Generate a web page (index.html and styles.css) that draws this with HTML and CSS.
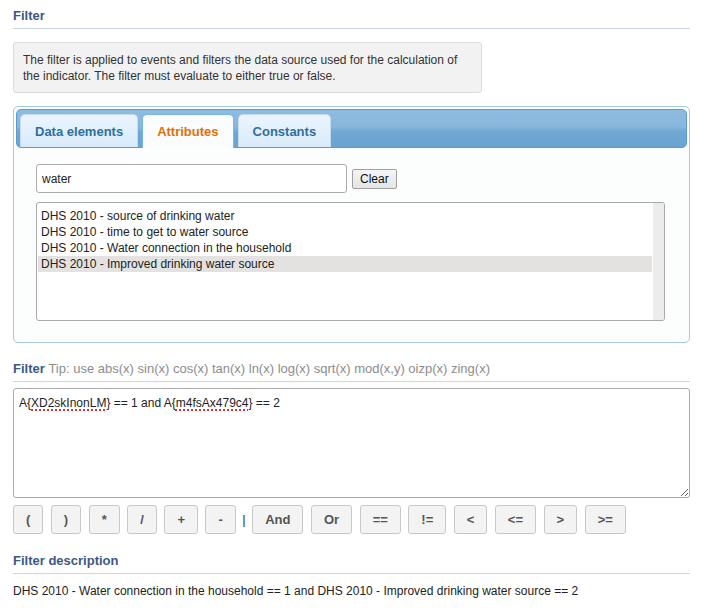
FILE: index.html
```html
<!DOCTYPE html>
<html>
<head>
<meta charset="utf-8">
<link rel="stylesheet" href="styles.css">
</head>
<body>
<h3 class="section-title">Filter</h3>
<div class="info-box">The filter is applied to events and filters the data source used for the calculation of the indicator. The filter must evaluate to either true or false.</div>

<div class="tabs">
  <div class="tabs-nav">
    <div class="tab">Data elements</div>
    <div class="tab tab-active">Attributes</div>
    <div class="tab">Constants</div>
  </div>
  <div class="tab-panel">
    <div class="search-row">
      <div class="search-input">water</div>
      <button class="clear-btn">Clear</button>
    </div>
    <div class="listbox">
      <div class="list-items">
        <div class="list-item">DHS 2010 - source of drinking water</div>
        <div class="list-item">DHS 2010 - time to get to water source</div>
        <div class="list-item">DHS 2010 - Water connection in the household</div>
        <div class="list-item list-item-selected">DHS 2010 - Improved drinking water source</div>
      </div>
      <div class="list-track"></div>
    </div>
  </div>
</div>

<h3 class="section-title section-tip">Filter <span class="tip">Tip: use abs(x) sin(x) cos(x) tan(x) ln(x) log(x) sqrt(x) mod(x,y) oizp(x) zing(x)</span></h3>
<div class="expression">A{<span class="misspelled">XD2skInonLM</span>} == 1 and A{<span class="misspelled">m4fsAx479c4</span>} == 2</div>

<div class="op-row">
  <button class="op-btn">(</button>
  <button class="op-btn">)</button>
  <button class="op-btn">*</button>
  <button class="op-btn">/</button>
  <button class="op-btn">+</button>
  <button class="op-btn">-</button>
  <span class="op-sep">|</span>
  <button class="op-btn">And</button>
  <button class="op-btn">Or</button>
  <button class="op-btn">==</button>
  <button class="op-btn">!=</button>
  <button class="op-btn">&lt;</button>
  <button class="op-btn">&lt;=</button>
  <button class="op-btn">&gt;</button>
  <button class="op-btn">&gt;=</button>
</div>

<h3 class="section-title section-desc">Filter description</h3>
<div class="description">DHS 2010 - Water connection in the household == 1 and DHS 2010 - Improved drinking water source == 2</div>
</body>
</html>
```

FILE: styles.css
```css
* { box-sizing: border-box; }

html, body {
  margin: 0;
  background: #ffffff;
}

body {
  padding: 8px 13px 0 13px;
  font-family: "Liberation Sans", Arial, sans-serif;
  font-size: 12px;
  color: #222;
}

.section-title {
  margin: 0;
  font-size: 13px;
  line-height: 16px;
  font-weight: bold;
  color: #3c5882;
  padding-bottom: 4px;
  border-bottom: 1px solid #c6d7ea;
}

.info-box {
  margin-top: 13px;
  width: 469px;
  background: #f2f2f2;
  border: 1px solid #dcdcdc;
  border-radius: 3px;
  padding: 9px 9px 8px 9px;
  font-size: 12px;
  line-height: 16px;
  color: #333;
}

.tabs {
  margin-top: 13px;
  border: 1px solid #a6c9e2;
  border-radius: 5px;
  padding: 2px;
  background: #fcfdfd;
}

.tabs-nav {
  display: flex;
  gap: 4px;
  padding: 4px 3px 0 3px;
  height: 39px;
  border: 1px solid #5b9bd0;
  border-radius: 5px;
  background: linear-gradient(to bottom, #8ebbe0 0%, #88b7dd 45%, #71a8d4 58%, #6aa3d1 100%);
}

.tab {
  height: 33px;
  padding: 0 14px;
  display: flex;
  align-items: center;
  font-size: 13px;
  font-weight: bold;
  color: #2e6e9e;
  border: 1px solid #c5dbec;
  border-bottom: 0;
  border-radius: 5px 5px 0 0;
  background: linear-gradient(to bottom, #eaf4fd 0%, #e2f0fc 50%, #d8eaf9 100%);
}

.tab-active {
  height: 34px;
  margin-bottom: -1px;
  color: #e17009;
  border-color: #79b7e7;
  background: #fbfcfd;
}

.tab-panel {
  padding: 16px 22px 19px 20px;
}

.search-row {
  display: flex;
  align-items: center;
  gap: 5px;
}

.search-input {
  width: 311px;
  height: 29px;
  border: 1px solid #ababab;
  border-radius: 3px;
  background: #fff;
  padding: 0 5px;
  display: flex;
  align-items: center;
  font-size: 12px;
  color: #222;
}

.clear-btn {
  height: 20px;
  padding: 0 7px;
  font-family: "Liberation Sans", Arial, sans-serif;
  font-size: 12px;
  color: #111;
  border: 1px solid #a0a0a0;
  border-radius: 2px;
  background: linear-gradient(to bottom, #f6f6f6, #e4e4e4);
}

.listbox {
  margin-top: 9px;
  height: 119px;
  border: 1px solid #a9a9a9;
  border-radius: 3px;
  background: #fff;
  display: flex;
  overflow: hidden;
}

.list-items {
  flex: 1;
  padding: 5px 1px 0 1px;
}

.list-item {
  height: 16px;
  line-height: 16px;
  padding-left: 3px;
  font-size: 12px;
  color: #222;
  white-space: nowrap;
}

.list-item-selected {
  background: #e3e2e0;
}

.list-track {
  width: 11px;
  background: #ececec;
}

.section-tip {
  margin-top: 18px;
}

.tip {
  font-weight: normal;
  color: #8c8c8c;
}

.expression {
  margin-top: 6px;
  height: 110px;
  border: 1px solid #a9a9a9;
  border-radius: 3px;
  padding: 7px 5px;
  font-size: 12px;
  line-height: 15px;
  color: #222;
  background: #fff;
  resize: vertical;
  overflow: auto;
}

.misspelled {
  text-decoration: underline dotted #e03030;
  text-decoration-thickness: 2px;
  text-decoration-skip-ink: none;
  text-underline-offset: 2px;
}

.op-row {
  margin-top: 7px;
  display: flex;
  align-items: center;
  gap: 7.5px;
}

.op-btn {
  height: 29px;
  padding: 0 12px;
  font-family: "Liberation Sans", Arial, sans-serif;
  font-size: 13px;
  font-weight: bold;
  color: #555;
  background: #f3f3f3;
  border: 1px solid #c8c8c8;
  border-radius: 3px;
}

.op-sep {
  margin: 0 -1px;
  font-size: 13px;
  color: #333;
}

.section-desc {
  margin-top: 19px;
}

.description {
  margin-top: 10px;
  font-size: 12px;
  line-height: 15px;
  color: #222;
}
```
